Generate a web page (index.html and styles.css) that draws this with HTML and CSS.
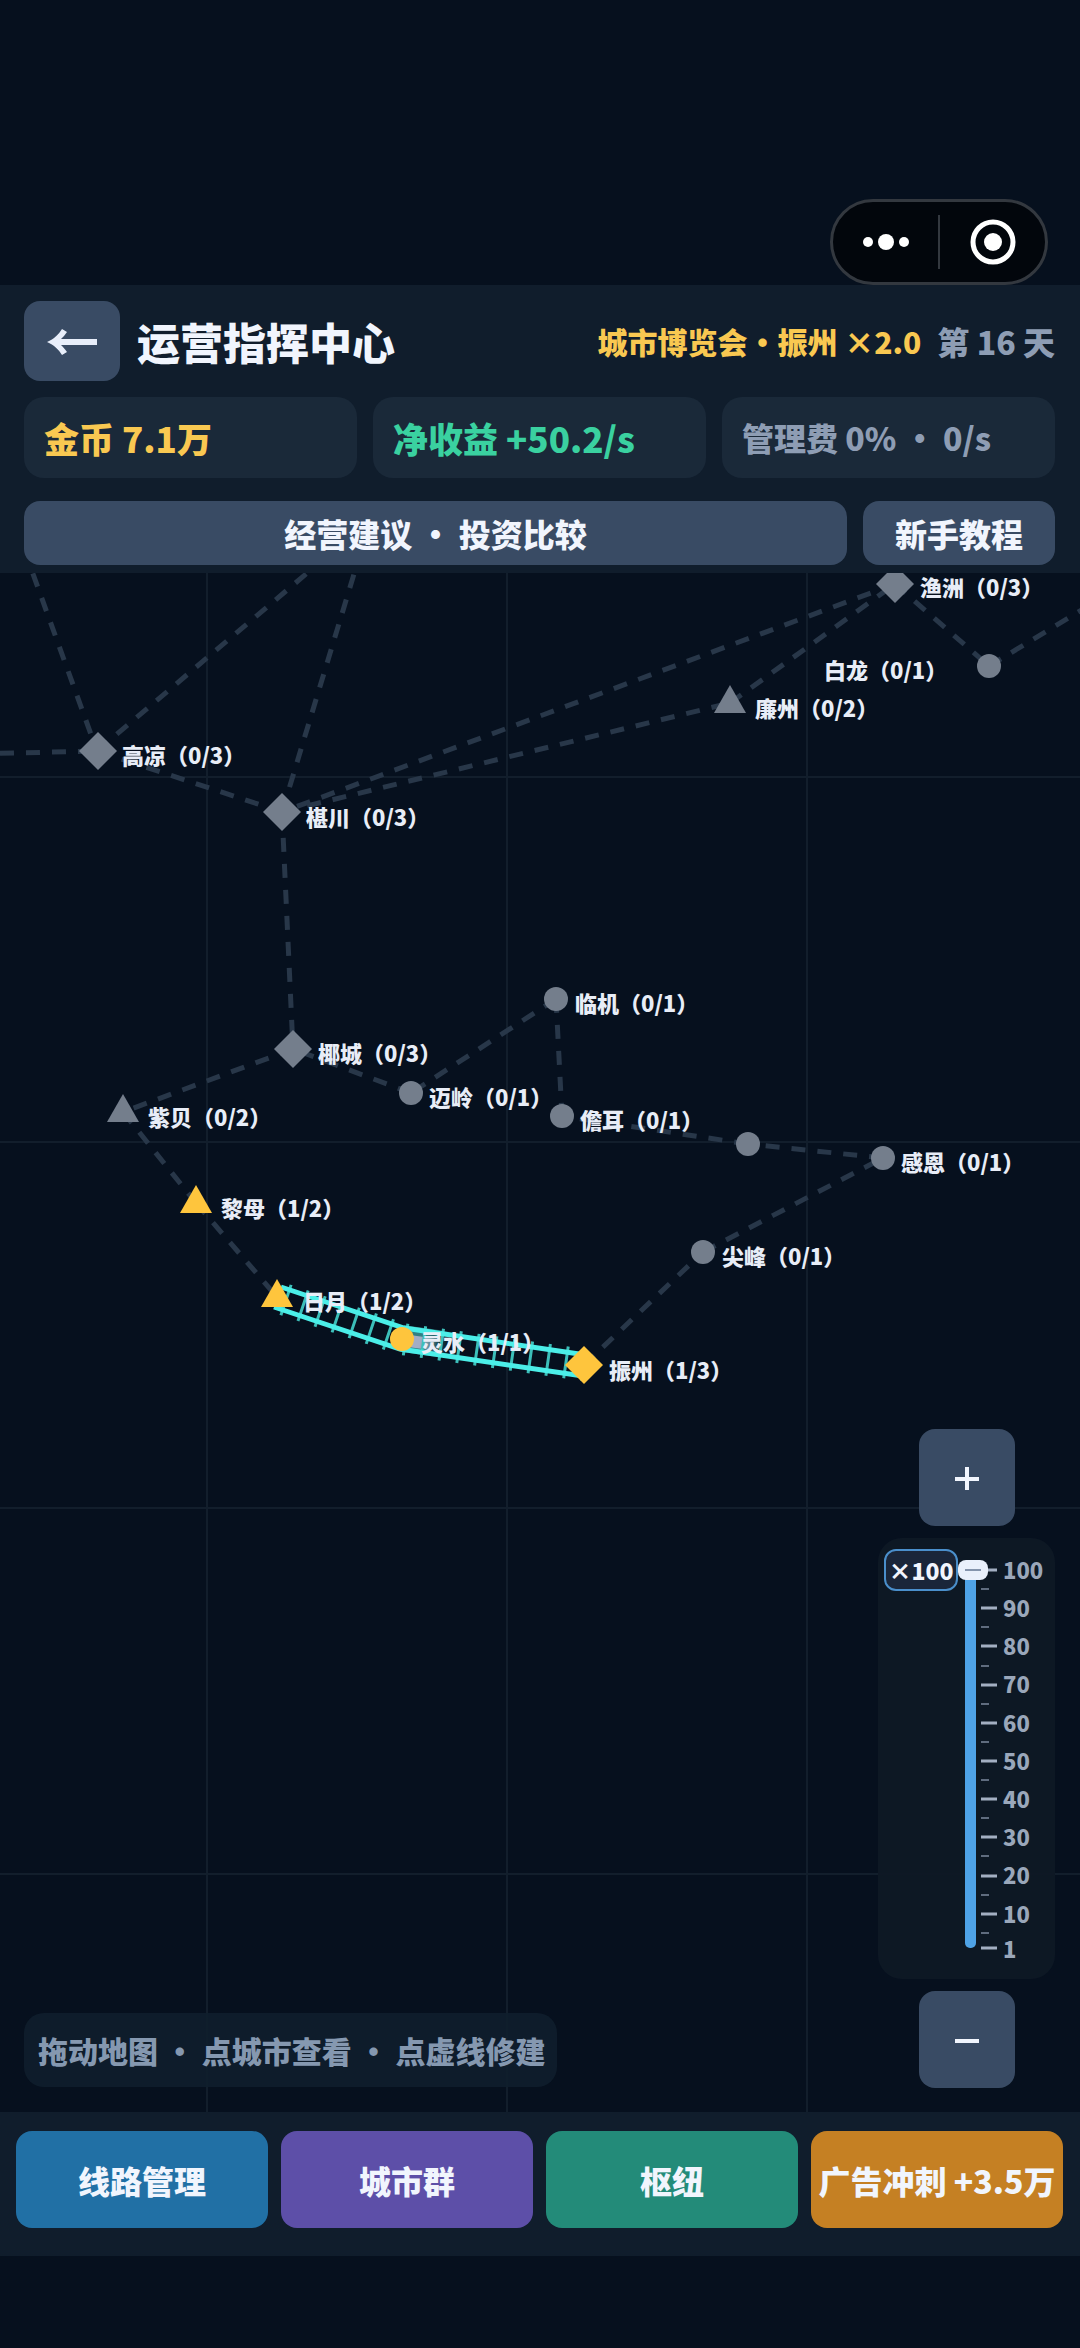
FILE: index.html
```html
<!DOCTYPE html>
<html lang="zh-CN">
<head>
    <meta charset="UTF-8">
    <meta name="viewport" content="width=device-width, initial-scale=1.0">
    <title>运营指挥中心</title>
    <link rel="stylesheet" href="styles.css">
</head>
<body>

    <div class="status-area">
        <div class="capsule">
            <button type="button" class="capsule-btn" aria-label="更多">
                <svg width="46" height="46" viewBox="0 0 46 46" fill="#fff">
                    <circle cx="5" cy="23" r="5"/>
                    <circle cx="23" cy="23" r="8"/>
                    <circle cx="41" cy="23" r="5"/>
                </svg>
            </button>
            <span class="capsule-line"></span>
            <button type="button" class="capsule-btn" aria-label="关闭">
                <svg width="46" height="46" viewBox="0 0 46 46">
                    <circle cx="23" cy="23" r="20" fill="none" stroke="#fff" stroke-width="5"/>
                    <circle cx="23" cy="23" r="9" fill="#fff"/>
                </svg>
            </button>
        </div>
    </div>

    <header class="top-panel">
        <div class="title-row">
            <button type="button" class="back-btn" aria-label="返回">
                <svg width="50" height="28" viewBox="0 0 50 28" fill="#e8eefa">
                    <path d="M0 15C7 12 12 7 15 2L20 5C18 8 16 10 14 12H50V18H14C16 20 18 22 20 25L15 28C12 23 7 18 0 15Z"/>
                </svg>
            </button>
            <h1>运营指挥中心</h1>
            <span class="event">城市博览会·振州 ×2.0</span>
            <span class="day">第 16 天</span>
        </div>
        <div class="stats">
            <div class="stat coins">金币 7.1万</div>
            <div class="stat income">净收益 +50.2/s</div>
            <div class="stat fee">管理费 0% · 0/s</div>
        </div>
        <div class="links">
            <button type="button" class="advice-btn">经营建议 · 投资比较</button>
            <button type="button" class="guide-btn">新手教程</button>
        </div>
    </header>

    <main class="map">
        <svg class="map-canvas" viewBox="0 573 1080 1539" preserveAspectRatio="xMidYMin slice">
            <defs>
                <path id="hub" d="M0 -19L19 0L0 19L-19 0Z"/>
                <path id="town" d="M0 -18L16 10H-16Z"/>
                <circle id="stop" r="12"/>
                <linearGradient id="trail">
                    <stop offset="0.5" stop-color="#3fa5a3" stop-opacity="0.75"/>
                    <stop offset="1" stop-color="#3fa5a3" stop-opacity="0"/>
                </linearGradient>
                <linearGradient id="car">
                    <stop offset="0.5" stop-color="#a3adc4"/>
                    <stop offset="1" stop-color="#a3adc4" stop-opacity="0"/>
                </linearGradient>
            </defs>

            <path class="grid" d="M207 573V2112M507 573V2112M807 573V2112M0 777H1080M0 1142H1080M0 1508H1080M0 1874H1080"/>

            <!-- planned routes -->
            <g class="routes">
                <path d="M24 549L97 751"/>
                <path d="M97 751L345 541"/>
                <path d="M-26 754L97 751"/>
                <path d="M97 751L282 812"/>
                <path d="M282 812L364 541"/>
                <path d="M895 584L282 812"/>
                <path d="M282 812L730 703"/>
                <path d="M730 703L895 584"/>
                <path d="M895 584L989 666"/>
                <path d="M989 666L1090 605"/>
                <path d="M282 812L293 1049"/>
                <path d="M293 1049L123 1112"/>
                <path d="M411 1093L293 1049"/>
                <path d="M556 999L411 1093"/>
                <path d="M556 999L562 1116"/>
                <path d="M748 1144L562 1116"/>
                <path d="M883 1158L748 1144"/>
                <path d="M703 1252L883 1158"/>
                <path d="M584 1365L703 1252"/>
                <path d="M123 1112L196 1203"/>
                <path d="M196 1203L277 1297"/>
            </g>

            <!-- built railway -->
            <g transform="translate(402 1339) rotate(8)">
                <rect x="0" y="-14" width="48" height="27" fill="url(#trail)"/>
                <rect x="0" y="-5" width="36" height="12" fill="url(#car)"/>
            </g>
            <path class="sleepers" d="M277 1297L402 1339L584 1365"/>
            <path class="rails" d="M281 1287L404 1328L586 1355M274 1307L400 1349L583 1376"/>

            <g class="locked">
                <use href="#hub" x="98" y="751"/>
                <use href="#hub" x="282" y="812"/>
                <use href="#hub" x="895" y="584"/>
                <use href="#hub" x="293" y="1049"/>
                <use href="#town" x="730" y="703"/>
                <use href="#town" x="123" y="1112"/>
                <use href="#stop" x="989" y="666"/>
                <use href="#stop" x="411" y="1093"/>
                <use href="#stop" x="556" y="999"/>
                <use href="#stop" x="562" y="1116"/>
                <use href="#stop" x="748" y="1144"/>
                <use href="#stop" x="883" y="1158"/>
                <use href="#stop" x="703" y="1252"/>
            </g>
            <g class="opened">
                <use href="#town" x="196" y="1203"/>
                <use href="#town" x="277" y="1297"/>
                <use href="#stop" x="402" y="1339"/>
                <use href="#hub" x="584" y="1365"/>
            </g>

            <g class="names">
                <text x="122" y="764">高凉（0/3）</text>
                <text x="306" y="826">椹川（0/3）</text>
                <text x="920" y="596">渔洲（0/3）</text>
                <text x="824" y="679">白龙（0/1）</text>
                <text x="755" y="717">廉州（0/2）</text>
                <text x="318" y="1062">椰城（0/3）</text>
                <text x="429" y="1106">迈岭（0/1）</text>
                <text x="148" y="1126">紫贝（0/2）</text>
                <text x="221" y="1217">黎母（1/2）</text>
                <text x="303" y="1310">日月（1/2）</text>
                <text x="421" y="1351">灵水（1/1）</text>
                <text x="575" y="1012">临机（0/1）</text>
                <text x="580" y="1129">儋耳（0/1）</text>
                <text x="901" y="1171">感恩（0/1）</text>
                <text x="722" y="1265">尖峰（0/1）</text>
                <text x="609" y="1379">振州（1/3）</text>
            </g>
        </svg>

        <div class="hint">拖动地图 · 点城市查看 · 点虚线修建</div>

        <div class="zoom">
            <button type="button" class="zoom-btn" aria-label="放大">
                <svg width="24" height="24" viewBox="0 0 24 24" stroke="#f1f5fd" stroke-width="4"><path d="M0 13H24M12 1V24"/></svg>
            </button>
            <div class="zoom-panel">
                <output class="zoom-value" for="zoomRange" id="zoomValue">×100</output>
                <div class="zoom-track">
                    <input type="range" id="zoomRange" min="1" max="100" value="100" aria-label="缩放">
                </div>
                <svg class="zoom-scale" width="72" height="410" viewBox="0 0 72 410">
                    <path class="major" d="M0 10H16M0 48H16M0 86H16M0 125H16M0 163H16M0 201H16M0 239H16M0 277H16M0 316H16M0 354H16M0 388H16"/>
                    <path class="minor" d="M0 29H8M0 67H8M0 106H8M0 144H8M0 182H8M0 220H8M0 258H8M0 296H8M0 335H8M0 373H8"/>
                    <text x="22" y="19">100</text>
                    <text x="22" y="57">90</text>
                    <text x="22" y="95">80</text>
                    <text x="22" y="133">70</text>
                    <text x="22" y="172">60</text>
                    <text x="22" y="210">50</text>
                    <text x="22" y="248">40</text>
                    <text x="22" y="286">30</text>
                    <text x="22" y="324">20</text>
                    <text x="22" y="363">10</text>
                    <text x="22" y="398">1</text>
                </svg>
            </div>
            <button type="button" class="zoom-btn" aria-label="缩小">
                <svg width="24" height="24" viewBox="0 0 24 24" stroke="#f1f5fd" stroke-width="4"><path d="M0 13H24"/></svg>
            </button>
        </div>
    </main>

    <nav class="bottom-bar">
        <button type="button" class="lines">线路管理</button>
        <button type="button" class="groups">城市群</button>
        <button type="button" class="hubs">枢纽</button>
        <button type="button" class="boost">广告冲刺 +3.5万</button>
    </nav>

    <script>
        var zoomRange = document.getElementById("zoomRange");

        zoomRange.oninput = function() {
            document.getElementById("zoomValue").innerText = "×" + zoomRange.value;
        };
    </script>

</body>
</html>
```

FILE: styles.css
```css
* {
    box-sizing: border-box;
}

body {
    margin: 0;
    min-height: 100vh;
    display: flex;
    flex-direction: column;
    padding-bottom: 92px;
    background-color: #06101e;
    color: #f1f5fd;
    font-family: "Noto Sans CJK SC", "Noto Sans", sans-serif;
    font-weight: 900;
}

button {
    display: flex;
    align-items: center;
    justify-content: center;
    padding: 0;
    border: none;
    border-radius: 16px;
    background-color: #394b64;
    color: #f1f5fd;
    font: inherit;
    font-size: 32px;
    line-height: 48px;
    white-space: nowrap;
    cursor: pointer;
}

/* mini program capsule */
.status-area {
    height: 285px;
    display: flex;
    justify-content: flex-end;
    align-items: flex-end;
    padding-right: 32px;
}

.capsule {
    display: flex;
    align-items: center;
    width: 218px;
    height: 86px;
    border: 3px solid #33383f;
    border-radius: 44px;
    background-color: #02060c;
}

.capsule-btn {
    flex: 1;
    background: none;
}

.capsule-line {
    width: 2px;
    height: 54px;
    background-color: #33383f;
}

/* top panel */
.top-panel {
    display: flex;
    flex-direction: column;
    height: 288px;
    padding: 16px 25px 8px 24px;
    background-color: #101d2c;
}

.title-row {
    display: flex;
    align-items: center;
    margin-bottom: 16px;
    font-size: 30px;
    line-height: 44px;
    white-space: nowrap;
}

.back-btn {
    width: 96px;
    height: 80px;
}

h1 {
    flex: 1;
    margin: 0 0 0 17px;
    font-size: 43px;
    font-weight: inherit;
    line-height: 64px;
}

.event {
    color: #f9c851;
}

.day {
    margin-left: 16px;
    color: #8e9db4;
    font-size: 32px;
}

.stats {
    display: grid;
    grid-template-columns: repeat(3, 1fr);
    gap: 16px;
    margin-bottom: 23px;
}

.stat {
    height: 81px;
    padding-left: 20px;
    border-radius: 20px;
    background-color: #1a2939;
    font-size: 35px;
    line-height: 81px;
    white-space: nowrap;
}

.coins {
    color: #f9c851;
}

.income {
    color: #3ad1a0;
}

.fee {
    color: #8e9db4;
    font-size: 32px;
}

.links {
    display: flex;
    gap: 16px;
}

.advice-btn {
    flex: 1;
    height: 64px;
}

.guide-btn {
    width: 192px;
    height: 64px;
}

/* map */
.map {
    position: relative;
    flex: 1;
    min-height: 700px;
    overflow: hidden;
}

.map-canvas {
    position: absolute;
    width: 100%;
    height: 100%;
}

.grid {
    stroke: #121e2c;
    stroke-width: 2;
}

.routes {
    stroke: #283749;
    stroke-width: 5;
    stroke-dasharray: 14 12;
}

.sleepers {
    fill: none;
    stroke: #3cbfba;
    stroke-width: 32;
    stroke-dasharray: 3 15;
    stroke-dashoffset: -8;
}

.rails {
    fill: none;
    stroke: #4beee8;
    stroke-width: 5;
}

.locked {
    fill: #747e8c;
}

.opened {
    fill: #fec53d;
}

.names {
    fill: #e8edf7;
    font-size: 22px;
}

.hint {
    position: absolute;
    left: 24px;
    bottom: 25px;
    padding: 0 12px 0 14px;
    border-radius: 20px;
    background-color: rgba(16, 30, 44, 0.9);
    color: #8598b0;
    font-size: 30px;
    line-height: 74px;
    white-space: nowrap;
}

.zoom {
    position: absolute;
    right: 25px;
    bottom: 24px;
    display: flex;
    flex-direction: column;
    align-items: center;
    gap: 12px;
}

.zoom-btn {
    width: 96px;
    height: 97px;
}

.zoom-panel {
    display: flex;
    align-items: flex-start;
    width: 177px;
    height: 441px;
    padding: 22px 0 0 6px;
    border-radius: 24px;
    background-color: rgba(14, 24, 37, 0.94);
}

.zoom-value {
    width: 74px;
    height: 42px;
    margin-top: -11px;
    border: 2px solid #4a8fcb;
    border-radius: 12px;
    background-color: #1a2639;
    font-size: 23px;
    line-height: 38px;
    text-align: center;
}

.zoom-track {
    position: relative;
    width: 30px;
    height: 398px;
}

.zoom-track::before {
    content: "";
    position: absolute;
    top: 10px;
    bottom: 10px;
    left: 7px;
    width: 11px;
    border-radius: 5px;
    background-color: #4ea2e6;
}

.zoom-track input {
    position: relative;
    width: 30px;
    height: 398px;
    margin: 0;
    appearance: none;
    background: none;
    writing-mode: vertical-lr;
    direction: rtl;
}

.zoom-track input::-webkit-slider-thumb {
    appearance: none;
    width: 30px;
    height: 20px;
    border-radius: 8px;
    background: linear-gradient(#8494ac, #8494ac) center / 16px 2px no-repeat #e9f0fb;
}

.zoom-scale {
    margin-left: -7px;
}

.zoom-scale text {
    fill: #9aa7ba;
    font-size: 22px;
}

.major {
    stroke: #a3afc2;
    stroke-width: 3;
}

.minor {
    stroke: #5f6c7f;
    stroke-width: 2;
}

/* bottom bar */
.bottom-bar {
    display: grid;
    grid-template-columns: repeat(4, 1fr);
    gap: 13px;
    padding: 19px 17px 28px 16px;
    background-color: #101d2c;
}

.bottom-bar button {
    height: 97px;
}

.bottom-bar .lines {
    background-color: #2170a5;
}

.bottom-bar .groups {
    background-color: #5d4fa8;
}

.bottom-bar .hubs {
    background-color: #238b79;
}

.bottom-bar .boost {
    background-color: #c58023;
}
```
